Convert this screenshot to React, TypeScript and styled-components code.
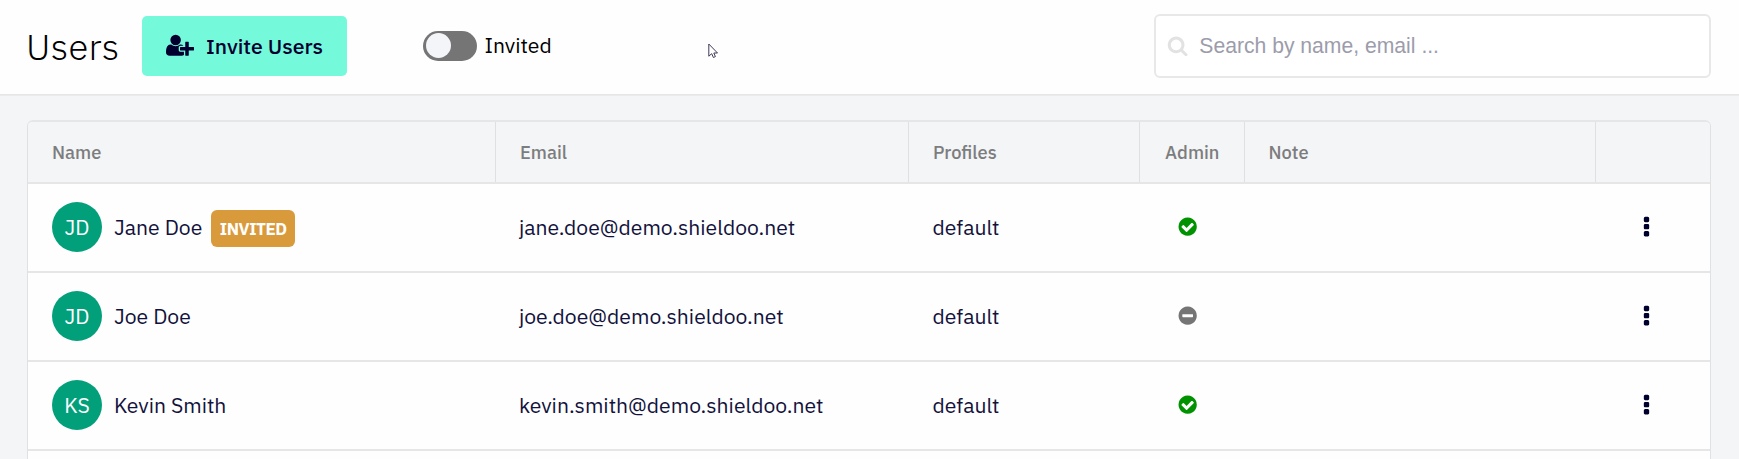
import React from 'react';
import styled, { createGlobalStyle, css } from 'styled-components';

const GlobalStyle = createGlobalStyle`
  *, *::before, *::after { box-sizing: border-box; }
  body {
    margin: 0;
    background: #f4f5f7;
    color: #000;
    font-family: "IBM Plex Sans", Roboto, "Liberation Sans", sans-serif;
    font-size: 21.13px;
  }
`;

const Page = styled.div`
  position: relative;
  height: 459px;
  overflow: hidden;
`;

const Toolbar = styled.header`
  display: flex;
  align-items: center;
  height: 96px;
  padding: 0 28px 4px 26px;
  background: #fefefe;
  border-bottom: 1px solid #ebebec;
  box-shadow: inset 0 -1px #e6e6e7;
`;

const Title = styled.h1`
  width: 116px;
  margin: 3px 0 0;
  font-size: 36.5px;
  font-weight: 300;
  line-height: 48px;
  letter-spacing: 0.3px;
`;

const InviteButton = styled.button`
  display: flex;
  align-items: center;
  width: 205px;
  height: 60px;
  padding: 0 0 0 24px;
  border: 0;
  border-radius: 5px;
  background: #75f9db;
  color: #00002e;
  font: inherit;
  font-size: 21.2px;
  font-weight: 500;
`;

const ButtonLabel = styled.span`
  margin-left: 12px;
  white-space: nowrap;
`;

const Toggle = styled.label`
  display: flex;
  align-items: center;
  gap: 7.5px;
  margin-left: 75.5px;
`;

const ToggleLabel = styled.span`
  padding-bottom: 1px;
`;

const Track = styled.span`
  display: flex;
  align-items: center;
  width: 54.5px;
  height: 30px;
  padding: 0 3px;
  border-radius: 15px;
  background: #757575;
`;

const Knob = styled.span`
  width: 25px;
  height: 25px;
  border-radius: 50%;
  background: #f4f5f9;
`;

const SearchBox = styled.div`
  display: flex;
  align-items: center;
  gap: 11px;
  width: 557px;
  height: 64px;
  margin-left: auto;
  padding-left: 11px;
  border: 2px solid #e8e8e8;
  border-radius: 6px;
  background: #fff;
  color: #e2e2e2;
`;

const SearchInput = styled.input`
  flex: 1;
  min-width: 0;
  padding: 1px 0 0;
  border: 0;
  outline: 0;
  background: transparent;
  font-family: Arial, "Liberation Sans", sans-serif;
  font-size: 21.15px;
  &::placeholder { color: #9c9cab; opacity: 1; }
`;

const Pointer = styled.svg`
  position: absolute;
  left: 708px;
  top: 43px;
`;

const Card = styled.section`
  height: 400px;
  margin: 24px 28px 0 27px;
  border: 1px solid #e0e1e2;
  border-top: 2px solid #e6e6e7;
  border-radius: 6px;
  background: #fefefe;
  overflow: hidden;
`;

const grid = css`
  display: grid;
  grid-template-columns: 468px 413px 231px 105px 351px 1fr;
`;

const HeadRow = styled.div`
  ${grid}
  height: 62px;
  background: #f4f5f7;
  border-bottom: 2px solid #e6e6e7;
`;

const HeadCell = styled.div<{ $indent: number }>`
  display: flex;
  align-items: center;
  padding: 0 0 1px ${(p) => p.$indent}px;
  color: #7c7d7e;
  font-size: 18.3px;
  font-weight: 500;
  &:not(:last-child) { border-right: 1px solid #dfe0e1; }
`;

const Row = styled.div`
  ${grid}
  height: 89px;
  border-bottom: 2px solid #e6e6e7;
  color: #12123c;
`;

const Cell = styled.div<{ $indent: number }>`
  display: flex;
  align-items: center;
  padding: 0 0 1px ${(p) => p.$indent}px;
  white-space: nowrap;
`;

const Label = styled.span`
  padding-bottom: 1px;
`;

const Avatar = styled.span`
  display: grid;
  place-items: center;
  width: 50px;
  height: 50px;
  margin-right: 12px;
  padding-bottom: 1px;
  border-radius: 50%;
  background: #02a07a;
  color: #fff;
`;

const Badge = styled.span`
  display: grid;
  place-items: center;
  width: 84px;
  height: 37px;
  margin: 3px 0 0 9px;
  border-radius: 6px;
  background: #d99a3c;
  color: #fff;
  font-size: 17px;
  font-weight: 700;
  letter-spacing: -0.45px;
`;

const ICONS = {
  search:
    'M1216 832q0-185-131.5-316.5t-316.5-131.5-316.5 131.5-131.5 316.5 131.5 316.5 316.5 131.5 316.5-131.5 131.5-316.5zm512 832q0 52-38 90t-90 38q-54 0-90-38l-343-342q-179 124-399 124-143 0-273.5-55.5t-225-150-150-225-55.5-273.5 55.5-273.5 150-225 225-150 273.5-55.5 273.5 55.5 225 150 150 225 55.5 273.5q0 220-124 399l343 343q37 37 37 90z',
  check:
    'M1412 734q0-28-18-46l-91-90q-19-19-45-19t-45 19l-408 407-226-226q-19-19-45-19t-45 19l-91 90q-18 18-18 46 0 27 18 45l362 362q19 19 45 19 27 0 46-19l543-543q18-18 18-45zm252 162q0 209-103 385.5t-279.5 279.5-385.5 103-385.5-103-279.5-279.5-103-385.5 103-385.5 279.5-279.5 385.5-103 385.5 103 279.5 279.5 103 385.5z',
  minus:
    'M1344 960v-128q0-26-19-45t-45-19h-768q-26 0-45 19t-19 45v128q0 26 19 45t45 19h768q26 0 45-19t19-45zm320-64q0 209-103 385.5t-279.5 279.5-385.5 103-385.5-103-279.5-279.5-103-385.5 103-385.5 279.5-279.5 385.5-103 385.5 103 279.5 279.5 103 385.5z',
  more:
    'M1088 1248v192q0 40-28 68t-68 28h-192q-40 0-68-28t-28-68v-192q0-40 28-68t68-28h192q40 0 68 28t28 68zm0-512v192q0 40-28 68t-68 28h-192q-40 0-68-28t-28-68v-192q0-40 28-68t68-28h192q40 0 68 28t28 68zm0-512v192q0 40-28 68t-68 28h-192q-40 0-68-28t-28-68v-192q0-40 28-68t68-28h192q40 0 68 28t28 68z',
  userPlus:
    'M704 896q-159 0-271.5-112.5t-112.5-271.5 112.5-271.5 271.5-112.5 271.5 112.5 112.5 271.5-112.5 271.5-271.5 112.5zm960 128h352q13 0 22.5 9.5t9.5 22.5v192q0 13-9.5 22.5t-22.5 9.5h-352v352q0 13-9.5 22.5t-22.5 9.5h-192q-13 0-22.5-9.5t-9.5-22.5v-352h-352q-13 0-22.5-9.5t-9.5-22.5v-192q0-13 9.5-22.5t22.5-9.5h352v-352q0-13 9.5-22.5t22.5-9.5h192q13 0 22.5 9.5t9.5 22.5v352zm-736 224q0 52 38 90t90 38h256v238q-68 50-171 50h-874q-121 0-194-69t-73-190q0-53 3.5-103.5t14-109 26.5-108.5 43-97.5 62-81 85.5-53.5 111.5-20q19 0 39 17 79 61 154.5 91.5t164.5 30.5 164.5-30.5 154.5-91.5q20-17 39-17 132 0 217 96h-223q-52 0-90 38t-38 90v192z',
};

interface IconProps {
  name: keyof typeof ICONS;
  size: number;
  color?: string;
}

function Icon({ name, size, color = 'currentColor' }: IconProps) {
  const box = name === 'userPlus' ? 2048 : 1792;
  return (
    <svg width={(size * box) / 1792} height={size} viewBox={`0 0 ${box} 1792`} fill={color} aria-hidden="true">
      <path d={ICONS[name]} />
    </svg>
  );
}

const HEADERS = [
  { label: 'Name', indent: 24 },
  { label: 'Email', indent: 24 },
  { label: 'Profiles', indent: 24 },
  { label: 'Admin', indent: 25 },
  { label: 'Note', indent: 23.5 },
  { label: '', indent: 0 },
];

const USERS = [
  { name: 'Jane Doe', initials: 'JD', email: 'jane.doe@demo.shieldoo.net', profile: 'default', admin: true, invited: true },
  { name: 'Joe Doe', initials: 'JD', email: 'joe.doe@demo.shieldoo.net', profile: 'default', admin: false, invited: false },
  { name: 'Kevin Smith', initials: 'KS', email: 'kevin.smith@demo.shieldoo.net', profile: 'default', admin: true, invited: false },
];

export default function App() {
  return (
    <Page>
      <GlobalStyle />
      <Toolbar>
        <Title>Users</Title>
        <InviteButton>
          <Icon name="userPlus" size={24.5} />
          <ButtonLabel>Invite Users</ButtonLabel>
        </InviteButton>
        <Toggle>
          <Track>
            <Knob />
          </Track>
          <ToggleLabel>Invited</ToggleLabel>
        </Toggle>
        <SearchBox>
          <Icon name="search" size={21.3} />
          <SearchInput placeholder="Search by name, email ..." />
        </SearchBox>
      </Toolbar>
      <Card>
        <HeadRow>
          {HEADERS.map((h) => (
            <HeadCell key={h.label} $indent={h.indent}>
              {h.label}
            </HeadCell>
          ))}
        </HeadRow>
        {USERS.map((u) => (
          <Row key={u.name}>
            <Cell $indent={24}>
              <Avatar>{u.initials}</Avatar>
              <Label>{u.name}</Label>
              {u.invited && <Badge>INVITED</Badge>}
            </Cell>
            <Cell $indent={23}>
              <Label>{u.email}</Label>
            </Cell>
            <Cell $indent={23.5}>
              <Label>{u.profile}</Label>
            </Cell>
            <Cell $indent={37}>
              {u.admin ? <Icon name="check" size={21.33} color="#009200" /> : <Icon name="minus" size={21.33} color="#757575" />}
            </Cell>
            <Cell $indent={0} />
            <Cell $indent={38}>
              <Icon name="more" size={25} color="#00002e" />
            </Cell>
          </Row>
        ))}
      </Card>
      <Pointer width="11" height="16" viewBox="0 0 11 16">
        <path d="M.8 1v12.2l2.9-2.5 1.7 3.8 2-.9-1.6-3.6h3.7z" fill="#fff" stroke="#3d3b59" strokeWidth="1" />
      </Pointer>
    </Page>
  );
}
